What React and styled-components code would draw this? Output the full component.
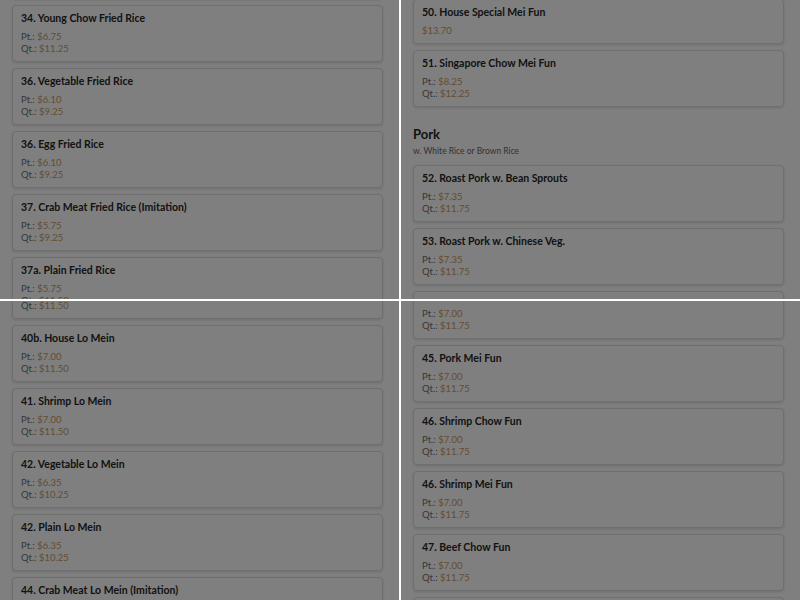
import React, { useLayoutEffect, useRef } from "react";
import styled, { createGlobalStyle } from "styled-components";

const GlobalStyle = createGlobalStyle`
  html, body {
    margin: 0;
    padding: 0;
    background: #fff;
  }
  body {
    font-family: Lato, "Open Sans", sans-serif;
    color: #333;
  }
`;

const Mosaic = styled.div`
  display: grid;
  grid-template-columns: 399px 399px;
  grid-template-rows: 299px 299px;
  gap: 2px;
  width: 800px;
  height: 600px;
  background: #fff;
`;

const Frame = styled.div`
  position: relative;
  overflow: hidden;
  background: #fff;

  &::after {
    content: "";
    position: absolute;
    inset: 0;
    background: rgba(0, 0, 0, 0.5);
    pointer-events: none;
  }
`;

const Viewport = styled.div`
  position: relative;
  height: 100%;
  overflow: hidden;
`;

const List = styled.div`
  display: flex;
  flex-direction: column;
  gap: 6px;
  padding: 0 16px 300px 12px;
`;

const Card = styled.div`
  border: 1px solid #dedede;
  border-radius: 4px;
  padding: 5px 8px 6px;
  background: #fff;
  box-shadow: 0 1px 3px rgba(0, 0, 0, 0.14);
`;

const Title = styled.div`
  font-size: 10.5px;
  line-height: 14px;
  font-weight: 700;
  color: #262626;
  margin-bottom: 6px;
`;

const PriceLine = styled.div`
  font-size: 9.5px;
  line-height: 12px;
  color: #6e6e6e;
`;

const Amount = styled.span`
  color: #c99a62;
`;

const Section = styled.div`
  padding: 13px 0 2px;
`;

const SectionName = styled.div`
  font-size: 13px;
  line-height: 16px;
  font-weight: 700;
  color: #262626;
`;

const SectionNote = styled.div`
  margin-top: 4px;
  font-size: 8.5px;
  line-height: 11px;
  color: #666;
`;

const leftMenu = [
  { id: "33", name: "33. Pork Fried Rice", pt: "$6.75", qt: "$11.25" },
  { id: "34", name: "34. Young Chow Fried Rice", pt: "$6.75", qt: "$11.25" },
  { id: "36v", name: "36. Vegetable Fried Rice", pt: "$6.10", qt: "$9.25" },
  { id: "36e", name: "36. Egg Fried Rice", pt: "$6.10", qt: "$9.25" },
  { id: "37", name: "37. Crab Meat Fried Rice (Imitation)", pt: "$5.75", qt: "$9.25" },
  { id: "37a", name: "37a. Plain Fried Rice", pt: "$5.75", qt: "$11.50" },
  { id: "40b", name: "40b. House Lo Mein", pt: "$7.00", qt: "$11.50" },
  { id: "41", name: "41. Shrimp Lo Mein", pt: "$7.00", qt: "$11.50" },
  { id: "42v", name: "42. Vegetable Lo Mein", pt: "$6.35", qt: "$10.25" },
  { id: "42p", name: "42. Plain Lo Mein", pt: "$6.35", qt: "$10.25" },
  { id: "44", name: "44. Crab Meat Lo Mein (Imitation)", pt: "$6.75", qt: "$11.25" },
  { id: "45", name: "45. Chicken Lo Mein", pt: "$7.00", qt: "$11.50" },
];

const rightMenu = [
  { id: "43", name: "43. Chicken Chow Fun", pt: "$7.00", qt: "$11.75" },
  { id: "44", name: "44. Pork Chow Fun", pt: "$7.00", qt: "$11.75" },
  { id: "45", name: "45. Pork Mei Fun", pt: "$7.00", qt: "$11.75" },
  { id: "46c", name: "46. Shrimp Chow Fun", pt: "$7.00", qt: "$11.75" },
  { id: "46m", name: "46. Shrimp Mei Fun", pt: "$7.00", qt: "$11.75" },
  { id: "47c", name: "47. Beef Chow Fun", pt: "$7.00", qt: "$11.75" },
  { id: "47m", name: "47. Beef Mei Fun", pt: "$7.00", qt: "$11.75" },
  { id: "48", name: "48. Chicken Mei Fun", pt: "$7.00", qt: "$11.75" },
  { id: "50", name: "50. House Special Mei Fun", price: "$13.70" },
  { id: "51", name: "51. Singapore Chow Mei Fun", pt: "$8.25", qt: "$12.25" },
  { id: "pork", section: "Pork", note: "w. White Rice or Brown Rice" },
  { id: "52", name: "52. Roast Pork w. Bean Sprouts", pt: "$7.35", qt: "$11.75" },
  { id: "53", name: "53. Roast Pork w. Chinese Veg.", pt: "$7.35", qt: "$11.75" },
  { id: "54", name: "54. Roast Pork w. Broccoli", pt: "$7.35", qt: "$11.75" },
  { id: "55", name: "55. Roast Pork w. Snow Peas", pt: "$7.35", qt: "$11.75" },
];

const MenuEntry = ({ item }) => {
  if (item.section) {
    return (
      <Section data-id={item.id}>
        <SectionName>{item.section}</SectionName>
        <SectionNote>{item.note}</SectionNote>
      </Section>
    );
  }
  return (
    <Card data-id={item.id}>
      <Title>{item.name}</Title>
      {item.price ? (
        <PriceLine><Amount>{item.price}</Amount></PriceLine>
      ) : (
        <>
          <PriceLine>Pt.: <Amount>{item.pt}</Amount></PriceLine>
          <PriceLine>Qt.: <Amount>{item.qt}</Amount></PriceLine>
        </>
      )}
    </Card>
  );
};

// one captured view of the menu, scrolled so `anchor` sits at `at` px
const Shot = ({ items, anchor, at }) => {
  const ref = useRef(null);

  useLayoutEffect(() => {
    const box = ref.current;
    const el = box.querySelector(`[data-id="${anchor}"]`);
    if (el) box.scrollTop = el.offsetTop - at;
  }, [anchor, at]);

  return (
    <Frame>
      <Viewport ref={ref}>
        <List>
          {items.map((item) => (
            <MenuEntry key={item.id} item={item} />
          ))}
        </List>
      </Viewport>
    </Frame>
  );
};

export default function App() {
  return (
    <>
      <GlobalStyle />
      <Mosaic>
        <Shot items={leftMenu} anchor="34" at={5} />
        <Shot items={rightMenu} anchor="50" at={-1} />
        <Shot items={leftMenu} anchor="40b" at={24} />
        <Shot items={rightMenu} anchor="45" at={44} />
      </Mosaic>
    </>
  );
}
